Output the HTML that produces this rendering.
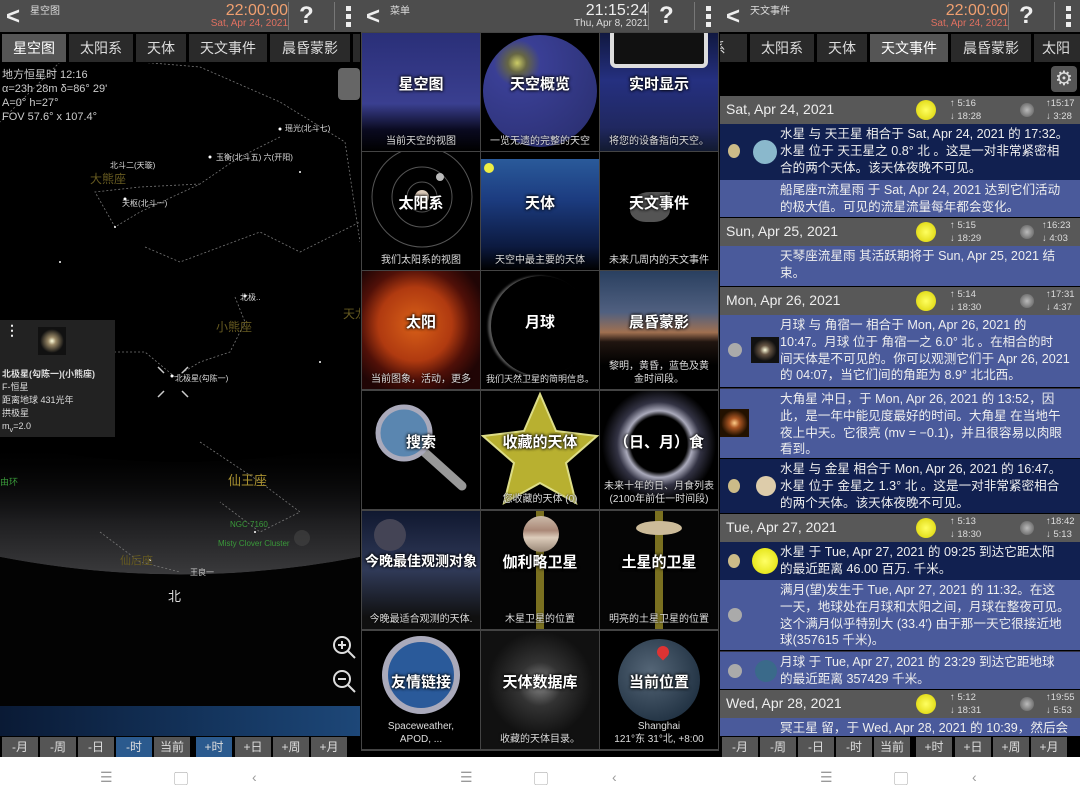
<!DOCTYPE html>
<html><head><meta charset="utf-8">
<style>
*{margin:0;padding:0;box-sizing:border-box}
body{width:1080px;height:801px;background:#fff;position:relative;overflow:hidden;font-family:"Liberation Sans","Noto Sans CJK SC",sans-serif;color:#fff}
.a{position:absolute}
.hdr{position:absolute;top:0;height:32px;background:#4d4d4d;width:360px}
.hdr .back{position:absolute;left:6px;top:3px;font-size:24px;color:#eee;font-weight:bold}
.hdr .ttl{position:absolute;left:30px;top:2px;font-size:10px;color:#ddd}
.hdr .time{position:absolute;right:72px;top:2px;font-size:16px;text-align:right;line-height:17px}
.hdr .date{position:absolute;right:72px;top:18px;font-size:10px;text-align:right}
.hdr .q{position:absolute;right:34px;top:2px;font-size:24px;font-weight:bold;color:#eee;border-left:1px solid #777;padding-left:10px;height:28px;width:38px}
.hdr .m{position:absolute;right:0;top:2px;width:26px;height:28px;border-left:1px solid #777}
.hdr .m i{position:absolute;left:11px;width:5px;height:5px;background:#eee}
.tabs{position:absolute;top:33px;height:30px;background:#000;width:360px;overflow:hidden}
.tab{position:absolute;top:1px;height:28px;background:#2a2a2a;color:#ddd;font-size:14px;text-align:center;line-height:28px}
.tab.on{background:#555;color:#fff}
.btns{position:absolute;top:736px;height:21px;width:360px;background:#000}
.btn{position:absolute;top:1px;height:20px;width:36px;background:#555;color:#ddd;font-size:12px;text-align:center;line-height:20px}
.btn.b{background:#2b5a8e}
.cell{position:absolute;width:118px;height:118px;overflow:hidden;background:#050505}
.cell .t{position:absolute;left:-10px;right:-10px;top:40px;text-align:center;font-size:15px;font-weight:bold;white-space:nowrap;text-shadow:0 0 3px #000,0 0 3px #000}
.cell .s{position:absolute;left:-10px;right:-10px;bottom:3px;text-align:center;font-size:10px;color:#ddd;line-height:13px;white-space:nowrap;text-shadow:0 0 2px #000}
.dh{position:absolute;left:720px;width:360px;height:28px;background:#585858}
.dh .d{position:absolute;left:6px;top:5px;font-size:14px;color:#eee}
.sun{position:absolute;width:20px;height:20px;border-radius:50%;background:radial-gradient(#ffff60,#d8d000);top:4px;left:196px}
.moon{position:absolute;width:14px;height:14px;border-radius:50%;background:radial-gradient(#bbb,#555);top:7px;left:300px}
.rs{position:absolute;font-size:9.5px;color:#ddd;line-height:13px;top:1px}
.ev{position:absolute;left:720px;width:360px;font-size:12.6px;line-height:16.8px;color:#eee}
.ev p{position:absolute;left:60px;right:0;top:2px;white-space:nowrap}
.dk{background:#112050}.lt{background:#4a5a9b}
.nav{position:absolute;top:757px;height:44px;background:#fff;width:1080px;left:0}
.nav span{position:absolute;top:12px;color:#999;font-size:14px}
</style></head><body>

<!-- LEFT PANEL -->
<div class="a" style="left:0;top:0;width:360px;height:757px;background:#000"></div>
<svg class="a" style="left:0;top:62px" width="360" height="645">
<defs><linearGradient id="hz" x1="0" y1="0" x2="0" y2="1"><stop offset="0" stop-color="#000" stop-opacity="0"/><stop offset="0.6" stop-color="#1e1e20"/><stop offset="1" stop-color="#3a3a3c"/></linearGradient></defs>
<path d="M0 380 Q180 420 360 380 L360 495 Q180 530 0 495Z" fill="url(#hz)"/>
<path d="M0 495 Q180 530 360 495 L360 645 L0 645Z" fill="#030303"/>
<g stroke="#777" stroke-width="0.8" fill="none" stroke-dasharray="2 2">
<polyline points="200,122 140,125 95,130 115,165 140,150 200,122 238,96 280,75"/>
<polyline points="60,0 0,60"/>
<polyline points="140,0 200,5 280,40 345,80 360,180"/>
<polyline points="145,185 180,200 260,170 300,190 360,160"/>
<polyline points="235,235 245,260 230,290 200,300 175,315"/>
<polyline points="175,315 145,290 95,290 40,350 60,330"/>
<polyline points="200,380 260,420 300,450 260,470 220,440"/>
<polyline points="100,470 140,500 180,510"/>
</g>
<g fill="#fff"><circle cx="280" cy="67" r="1.5"/><circle cx="210" cy="95" r="1.5"/><circle cx="125" cy="137" r="1.5"/><circle cx="245" cy="234" r="1.5"/><circle cx="172" cy="314" r="1.5"/><circle cx="115" cy="165" r="1"/><circle cx="60" cy="200" r="1"/><circle cx="300" cy="110" r="1"/><circle cx="320" cy="300" r="1"/><circle cx="30" cy="260" r="1"/><circle cx="255" cy="470" r="1"/><circle cx="150" cy="498" r="1"/></g>
<g stroke="#ccc" stroke-width="1.5"><path d="M158 305l6 6M188 305l-6 6M158 335l6-6M188 335l-6-6"/></g>
<circle cx="302" cy="476" r="8" fill="#444" opacity=".6"/>
</svg>
<div class="a" style="left:2px;top:68px;font-size:11px;line-height:14px;color:#ccc">地方恒星时 12:16<br>α=23h 28m  δ=86° 29'<br>A=0° h=27°<br>FOV 57.6° x 107.4°</div>
<div class="a" style="left:338px;top:68px;width:22px;height:32px;background:#666;border-radius:4px"></div>
<div class="a" style="left:285px;top:123px;font-size:8px;color:#ddd">瑶光(北斗七)</div>
<div class="a" style="left:110px;top:160px;font-size:8px;color:#ddd">北斗二(天璇)</div>
<div class="a" style="left:216px;top:152px;font-size:8px;color:#ddd">玉衡(北斗五) 六(开阳)</div>
<div class="a" style="left:122px;top:198px;font-size:8px;color:#ddd">天枢(北斗一)</div>
<div class="a" style="left:90px;top:170px;font-size:12px;color:#665a20">大熊座</div>
<div class="a" style="left:240px;top:292px;font-size:8px;color:#ddd">北极..</div>
<div class="a" style="left:216px;top:318px;font-size:12px;color:#665a20">小熊座</div>
<div class="a" style="left:343px;top:305px;font-size:12px;color:#665a20">天龙</div>
<div class="a" style="left:175px;top:373px;font-size:8px;color:#ddd">北极星(勾陈一)</div>
<div class="a" style="left:228px;top:470px;font-size:13px;color:#a89030">仙王座</div>
<div class="a" style="left:0;top:475px;font-size:9px;color:#3a9a3a">由环</div>
<div class="a" style="left:230px;top:520px;font-size:8px;color:#3a9a3a">NGC 7160</div>
<div class="a" style="left:218px;top:539px;font-size:8px;color:#3a9a3a">Misty Clover Cluster</div>
<div class="a" style="left:120px;top:552px;font-size:11px;color:#665a20">仙后座</div>
<div class="a" style="left:190px;top:567px;font-size:8px;color:#ccc">王良一</div>
<div class="a" style="left:168px;top:586px;font-size:13px;color:#ddd">北</div>
<div class="a" style="left:0;top:320px;width:115px;height:117px;background:#222"></div>
<div class="a" style="left:5px;top:322px;font-size:14px;color:#eee;font-weight:bold">⋮</div>
<div class="a" style="left:38px;top:327px;width:28px;height:28px;background:radial-gradient(circle,#ffd 0,#986 20%,#111 60%)"></div>
<div class="a" style="left:2px;top:368px;font-size:9px;line-height:13px;color:#ddd"><b>北极星(勾陈一)(小熊座)</b><br>F-恒星<br>距离地球 431光年<br>拱极星<br>m<sub>v</sub>=2.0</div>
<svg class="a" style="left:330px;top:633px" width="28" height="62"><g stroke="#ddd" stroke-width="2" fill="none"><circle cx="12" cy="12" r="8"/><path d="M18 18l7 7M8 12h8M12 8v8"/><circle cx="12" cy="46" r="8"/><path d="M18 52l7 7M8 46h8"/></g></svg>
<div class="a" style="left:0;top:706px;width:360px;height:30px;background:linear-gradient(90deg,#0a1a35,#14355e 60%,#1d4778)"></div>
<div class="hdr" style="left:0">
<div class="back">&lt;</div><div class="ttl">星空图</div>
<div class="time" style="color:#f0a070">22:00:00</div><div class="date" style="color:#e07060">Sat, Apr 24, 2021</div>
<div class="q">?</div><div class="m"><i style="top:4px"></i><i style="top:12px"></i><i style="top:20px"></i></div></div>
<div class="tabs" style="left:0">
<div class="tab on" style="left:2px;width:64px">星空图</div>
<div class="tab" style="left:69px;width:64px">太阳系</div>
<div class="tab" style="left:136px;width:50px">天体</div>
<div class="tab" style="left:189px;width:78px">天文事件</div>
<div class="tab" style="left:270px;width:80px">晨昏蒙影</div>
<div class="tab" style="left:353px;width:10px"></div></div>
<div class="btns" style="left:0">
<div class="btn" style="left:2px">-月</div><div class="btn" style="left:40px">-周</div><div class="btn" style="left:78px">-日</div><div class="btn b" style="left:116px">-时</div><div class="btn" style="left:154px">当前</div><div class="btn b" style="left:196px">+时</div><div class="btn" style="left:235px">+日</div><div class="btn" style="left:273px">+周</div><div class="btn" style="left:311px">+月</div></div>

<!-- MIDDLE PANEL -->
<div class="a" style="left:360px;top:0;width:360px;height:757px;background:#000"></div>
<div class="a" style="left:361px;top:32px;width:358px;height:719px;background:#444"></div>
<div class="hdr" style="left:360px">
<div class="back">&lt;</div><div class="ttl">菜单</div>
<div class="time" style="color:#eee">21:15:24</div><div class="date" style="color:#ddd">Thu, Apr 8, 2021</div>
<div class="q">?</div><div class="m"><i style="top:4px"></i><i style="top:12px"></i><i style="top:20px"></i></div></div>

<div class="cell" style="left:362px;top:33px;background:linear-gradient(#2a2f78,#3a3f90 60%,#0a0a20 82%,#000)"><div class="t">星空图</div><div class="s">当前天空的视图</div></div>
<div class="cell" style="left:481px;top:33px;background:#000"><div class="a" style="left:2px;top:2px;width:114px;height:112px;border-radius:50%;background:radial-gradient(circle at 30% 25%,#cc6 0,#664 8%,#3a3f95 20%,#2a2f70 90%)"></div><div class="t">天空概览</div><div class="s">一览无遗的完整的天空</div></div>
<div class="cell" style="left:600px;top:33px;background:linear-gradient(#101840,#253080 40%,#202860 80%,#121a30)"><div class="a" style="left:10px;top:-5px;width:98px;height:40px;background:#111;border:4px solid #ddd;border-radius:6px"></div><div class="t">实时显示</div><div class="s">将您的设备指向天空。</div></div>

<div class="cell" style="left:362px;top:152px;background:#000"><svg class="a" width="118" height="118"><g fill="none" stroke="#555"><circle cx="60" cy="45" r="15"/><circle cx="60" cy="45" r="30"/><circle cx="60" cy="45" r="50"/></g><circle cx="60" cy="45" r="7" fill="#dcb"/><circle cx="78" cy="25" r="4" fill="#bbb"/></svg><div class="t">太阳系</div><div class="s">我们太阳系的视图</div></div>
<div class="cell" style="left:481px;top:152px;background:linear-gradient(#000 0,#000 6%,#2a5a9a 6%,#1c3c80 40%,#0c1a40 80%,#000)"><div class="a" style="left:3px;top:11px;width:10px;height:10px;border-radius:50%;background:#ee4"></div><div class="t">天体</div><div class="s">天空中最主要的天体</div></div>
<div class="cell" style="left:600px;top:152px;background:#000"><div class="a" style="left:30px;top:40px;width:40px;height:30px;background:#777;border-radius:50% 0 40% 40%;opacity:.7"></div><div class="t">天文事件</div><div class="s">未来几周内的天文事件</div></div>

<div class="cell" style="left:362px;top:271px;background:radial-gradient(circle at 45% 45%,#d86018 0,#b03a10 40%,#501008 60%,#200505 80%)"><div class="t">太阳</div><div class="s">当前图象，活动，更多</div></div>
<div class="cell" style="left:481px;top:271px;background:#000"><div class="a" style="left:10px;top:5px;width:100px;height:100px;border-radius:50%;box-shadow:-3px 0 2px #555"></div><div class="t">月球</div><div class="s" style="font-size:9px">我们天然卫星的简明信息。</div></div>
<div class="cell" style="left:600px;top:271px;background:linear-gradient(#2a4060 0,#506080 35%,#a07050 52%,#201510 60%,#000 80%)"><div class="t">晨昏蒙影</div><div class="s">黎明，黄昏，蓝色及黄<br>金时间段。</div></div>

<div class="cell" style="left:362px;top:391px;background:#000"><svg class="a" width="118" height="118"><line x1="50" y1="50" x2="100" y2="95" stroke="#999" stroke-width="9" stroke-linecap="round"/><circle cx="42" cy="42" r="26" fill="#5a86b0" stroke="#aab" stroke-width="5"/></svg><div class="t">搜索</div></div>
<div class="cell" style="left:481px;top:391px;background:#000"><svg class="a" width="118" height="118"><polygon points="59,3 75,40 116,45 85,72 95,112 59,92 23,112 33,72 2,45 43,40" fill="#b8b030" stroke="#dd8" stroke-width="2"/></svg><div class="t">收藏的天体</div><div class="s">您收藏的天体 (0)</div></div>
<div class="cell" style="left:600px;top:391px;background:radial-gradient(circle at 50% 45%,#000 0,#000 32%,#aab 38%,#334 48%,#000 65%)"><div class="t">（日、月）食</div><div class="s">未来十年的日、月食列表<br>(2100年前任一时间段)</div></div>

<div class="cell" style="left:362px;top:511px;background:linear-gradient(#101830,#303a58 50%,#101010 90%)"><div class="a" style="left:12px;top:8px;width:32px;height:32px;border-radius:50%;background:#445"></div><div class="t" style="font-size:14px">今晚最佳观测对象</div><div class="s">今晚最适合观测的天体.</div></div>
<div class="cell" style="left:481px;top:511px;background:#050505"><div class="a" style="left:55px;top:0;width:8px;height:118px;background:#7a7020"></div><div class="a" style="left:42px;top:5px;width:36px;height:36px;border-radius:50%;background:linear-gradient(#cba,#a87 40%,#dcb 60%,#987)"></div><div class="t">伽利略卫星</div><div class="s">木星卫星的位置</div></div>
<div class="cell" style="left:600px;top:511px;background:#050505"><div class="a" style="left:55px;top:0;width:8px;height:118px;background:#7a7020"></div><div class="a" style="left:36px;top:10px;width:46px;height:14px;border-radius:50%;background:#cb9"></div><div class="t">土星的卫星</div><div class="s">明亮的土星卫星的位置</div></div>

<div class="cell" style="left:362px;top:631px;background:#000"><div class="a" style="left:20px;top:5px;width:78px;height:78px;border-radius:50%;background:#2a5a9a;border:6px solid #aab"></div><div class="t">友情链接</div><div class="s">Spaceweather,<br>APOD, ...</div></div>
<div class="cell" style="left:481px;top:631px;background:radial-gradient(circle at 50% 45%,#888 0,#333 25%,#111 60%)"><div class="t">天体数据库</div><div class="s">收藏的天体目录。</div></div>
<div class="cell" style="left:600px;top:631px;background:#000"><div class="a" style="left:18px;top:8px;width:82px;height:82px;border-radius:50%;background:radial-gradient(circle at 40% 40%,#567 0,#345 50%,#123)"></div><div class="a" style="left:57px;top:15px;width:12px;height:12px;border-radius:50% 50% 50% 0;transform:rotate(-45deg);background:#d33"></div><div class="t">当前位置</div><div class="s">Shanghai<br>121°东 31°北, +8:00</div></div>

<!-- RIGHT PANEL -->
<div class="a" style="left:720px;top:0;width:360px;height:757px;background:#000"></div>
<div class="hdr" style="left:720px">
<div class="back">&lt;</div><div class="ttl">天文事件</div>
<div class="time" style="color:#f0a070">22:00:00</div><div class="date" style="color:#e07060">Sat, Apr 24, 2021</div>
<div class="q">?</div><div class="m"><i style="top:4px"></i><i style="top:12px"></i><i style="top:20px"></i></div></div>
<div class="tabs" style="left:720px">
<div class="tab" style="left:-30px;width:57px">系</div>
<div class="tab" style="left:30px;width:64px">太阳系</div>
<div class="tab" style="left:97px;width:50px">天体</div>
<div class="tab on" style="left:150px;width:78px">天文事件</div>
<div class="tab" style="left:231px;width:80px">晨昏蒙影</div>
<div class="tab" style="left:314px;width:50px;text-align:left;padding-left:8px">太阳</div></div>
<div class="a" style="left:1051px;top:66px;width:26px;height:26px;background:#555;border-radius:4px;font-size:20px;line-height:26px;text-align:center;color:#ddd">⚙</div>

<div class="dh" style="top:96px"><div class="d">Sat, Apr 24, 2021</div><div class="sun"></div><div class="rs" style="left:230px">↑ 5:16<br>↓ 18:28</div><div class="moon"></div><div class="rs" style="left:326px">↑15:17<br>↓ 3:28</div></div>
<div class="ev dk" style="top:124px;height:56px"><div class="a" style="left:8px;top:20px;width:12px;height:14px;border-radius:50%;background:#cb8"></div><div class="a" style="left:33px;top:16px;width:24px;height:24px;border-radius:50%;background:#8ab8cc"></div><p>水星 与 天王星 相合于 Sat, Apr 24, 2021 的 17:32。<br>水星 位于 天王星之 0.8° 北 。这是一对非常紧密相<br>合的两个天体。该天体夜晚不可见。</p></div>
<div class="ev lt" style="top:180px;height:37px"><p>船尾座π流星雨 于 Sat, Apr 24, 2021 达到它们活动<br>的极大值。可见的流星流量每年都会变化。</p></div>
<div class="dh" style="top:218px"><div class="d">Sun, Apr 25, 2021</div><div class="sun"></div><div class="rs" style="left:230px">↑ 5:15<br>↓ 18:29</div><div class="moon"></div><div class="rs" style="left:322px">↑16:23<br>↓ 4:03</div></div>
<div class="ev lt" style="top:246px;height:40px"><p>天琴座流星雨 其活跃期将于 Sun, Apr 25, 2021 结<br>束。</p></div>
<div class="dh" style="top:287px"><div class="d">Mon, Apr 26, 2021</div><div class="sun"></div><div class="rs" style="left:230px">↑ 5:14<br>↓ 18:30</div><div class="moon"></div><div class="rs" style="left:326px">↑17:31<br>↓ 4:37</div></div>
<div class="ev lt" style="top:315px;height:72px"><div class="a" style="left:8px;top:28px;width:14px;height:14px;border-radius:50%;background:#aaa"></div><div class="a" style="left:31px;top:22px;width:28px;height:26px;background:radial-gradient(#ffd 0,#654 25%,#111 60%)"></div><p>月球 与 角宿一 相合于 Mon, Apr 26, 2021 的<br>10:47。月球 位于 角宿一之 6.0° 北 。在相合的时<br>间天体是不可见的。你可以观测它们于 Apr 26, 2021<br>的 04:07，当它们间的角距为 8.9° 北北西。</p></div>
<div class="ev lt" style="top:388px;height:70px;border-top:1px solid #334"><div class="a" style="left:0;top:20px;width:29px;height:28px;background:radial-gradient(#fc8 0,#a52 25%,#210 65%)"></div><p>大角星 冲日，于 Mon, Apr 26, 2021 的 13:52，因<br>此，是一年中能见度最好的时间。大角星 在当地午<br>夜上中天。它很亮 (mv = −0.1)，并且很容易以肉眼<br>看到。</p></div>
<div class="ev dk" style="top:459px;height:54px"><div class="a" style="left:8px;top:20px;width:12px;height:14px;border-radius:50%;background:#cb8"></div><div class="a" style="left:36px;top:17px;width:20px;height:20px;border-radius:50%;background:#dca"></div><p>水星 与 金星 相合于 Mon, Apr 26, 2021 的 16:47。<br>水星 位于 金星之 1.3° 北 。这是一对非常紧密相合<br>的两个天体。该天体夜晚不可见。</p></div>
<div class="dh" style="top:514px"><div class="d">Tue, Apr 27, 2021</div><div class="sun"></div><div class="rs" style="left:230px">↑ 5:13<br>↓ 18:30</div><div class="moon"></div><div class="rs" style="left:326px">↑18:42<br>↓ 5:13</div></div>
<div class="ev dk" style="top:542px;height:38px"><div class="a" style="left:8px;top:12px;width:12px;height:14px;border-radius:50%;background:#cb8"></div><div class="a" style="left:32px;top:6px;width:26px;height:26px;border-radius:50%;background:radial-gradient(#ff6,#dd0)"></div><p>水星 于 Tue, Apr 27, 2021 的 09:25 到达它距太阳<br>的最近距离 46.00 百万. 千米。</p></div>
<div class="ev lt" style="top:580px;height:70px"><div class="a" style="left:8px;top:28px;width:14px;height:14px;border-radius:50%;background:#aaa"></div><p>满月(望)发生于 Tue, Apr 27, 2021 的 11:32。在这<br>一天，地球处在月球和太阳之间，月球在整夜可见。<br>这个满月似乎特别大 (33.4′) 由于那一天它很接近地<br>球(357615 千米)。</p></div>
<div class="ev lt" style="top:651px;height:38px;border-top:1px solid #334"><div class="a" style="left:8px;top:12px;width:14px;height:14px;border-radius:50%;background:#aaa"></div><div class="a" style="left:35px;top:8px;width:22px;height:22px;border-radius:50%;background:#3a6a8a"></div><p>月球 于 Tue, Apr 27, 2021 的 23:29 到达它距地球<br>的最近距离 357429 千米。</p></div>
<div class="dh" style="top:690px"><div class="d">Wed, Apr 28, 2021</div><div class="sun"></div><div class="rs" style="left:230px">↑ 5:12<br>↓ 18:31</div><div class="moon"></div><div class="rs" style="left:326px">↑19:55<br>↓ 5:53</div></div>
<div class="ev lt" style="top:718px;height:18px;overflow:hidden"><p>冥王星 留，于 Wed, Apr 28, 2021 的 10:39，然后会</p></div>
<div class="btns" style="left:720px">
<div class="btn" style="left:2px">-月</div><div class="btn" style="left:40px">-周</div><div class="btn" style="left:78px">-日</div><div class="btn" style="left:116px">-时</div><div class="btn" style="left:154px">当前</div><div class="btn" style="left:196px">+时</div><div class="btn" style="left:235px">+日</div><div class="btn" style="left:273px">+周</div><div class="btn" style="left:311px">+月</div></div>

<div class="nav">
<span style="left:100px">☰</span><span style="left:174px">▢</span><span style="left:252px">‹</span>
<span style="left:460px">☰</span><span style="left:534px">▢</span><span style="left:612px">‹</span>
<span style="left:820px">☰</span><span style="left:894px">▢</span><span style="left:972px">‹</span>
</div>
</body></html>
